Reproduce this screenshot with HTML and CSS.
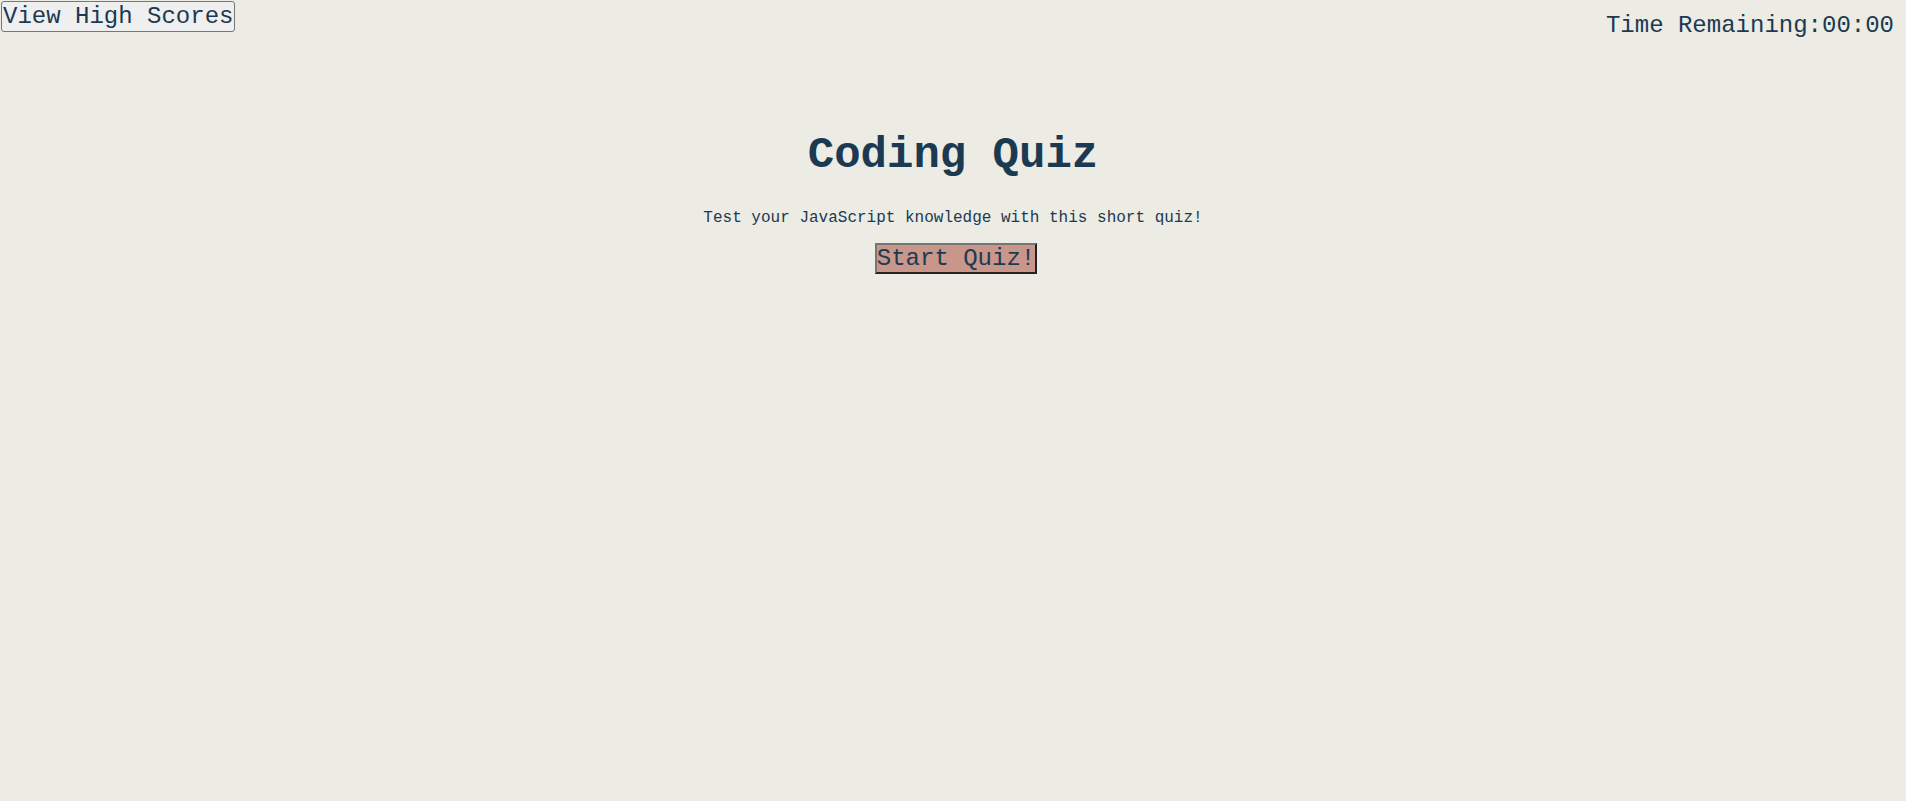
FILE: index.html
```html
<!DOCTYPE html>
<html lang="en">
<head>
<meta charset="utf-8">
<title>Coding Quiz</title>
<link rel="stylesheet" href="styles.css">
</head>
<body>
<header class="topbar">
  <button class="scores-btn">View High Scores</button>
  <span class="timer">Time Remaining:00:00</span>
</header>
<main class="intro">
  <h1 class="title">Coding Quiz</h1>
  <p class="subtitle">Test your JavaScript knowledge with this short quiz!</p>
  <button class="start-btn">Start Quiz!</button>
</main>
</body>
</html>
```
FILE: styles.css
```css
html, body {
  margin: 0;
  padding: 0;
}
body {
  background: #ecebe4;
  color: #1b3a52;
  font-family: "Liberation Mono", "Courier New", monospace;
  min-height: 100vh;
}
.topbar {
  display: flex;
  justify-content: space-between;
  align-items: flex-start;
  height: 40px;
}
.scores-btn {
  margin: 1px 0 0 1px;
  font-family: inherit;
  font-size: 24px;
  line-height: 27px;
  color: #1b3a52;
  background: #efefef;
  border: 1px solid #767676;
  border-radius: 3px;
  padding: 1px 1px;
}
.timer {
  font-size: 24px;
  line-height: 27px;
  margin: 12px 12px 0 0;
}
.intro {
  display: flex;
  flex-direction: column;
  align-items: center;
}
.title {
  font-size: 44px;
  line-height: 50px;
  font-weight: bold;
  margin: 90px 0 0;
}
.subtitle {
  font-size: 16px;
  line-height: 18px;
  margin: 29px 0 0;
}
.start-btn {
  margin: 16px 0 0 6px;
  font-family: inherit;
  font-size: 24px;
  line-height: 27px;
  color: #1b3a52;
  background: #c8968b;
  border-style: solid;
  border-width: 2px;
  border-color: #767676 #222222 #222222 #767676;
  border-radius: 0;
  padding: 0;
}
```
